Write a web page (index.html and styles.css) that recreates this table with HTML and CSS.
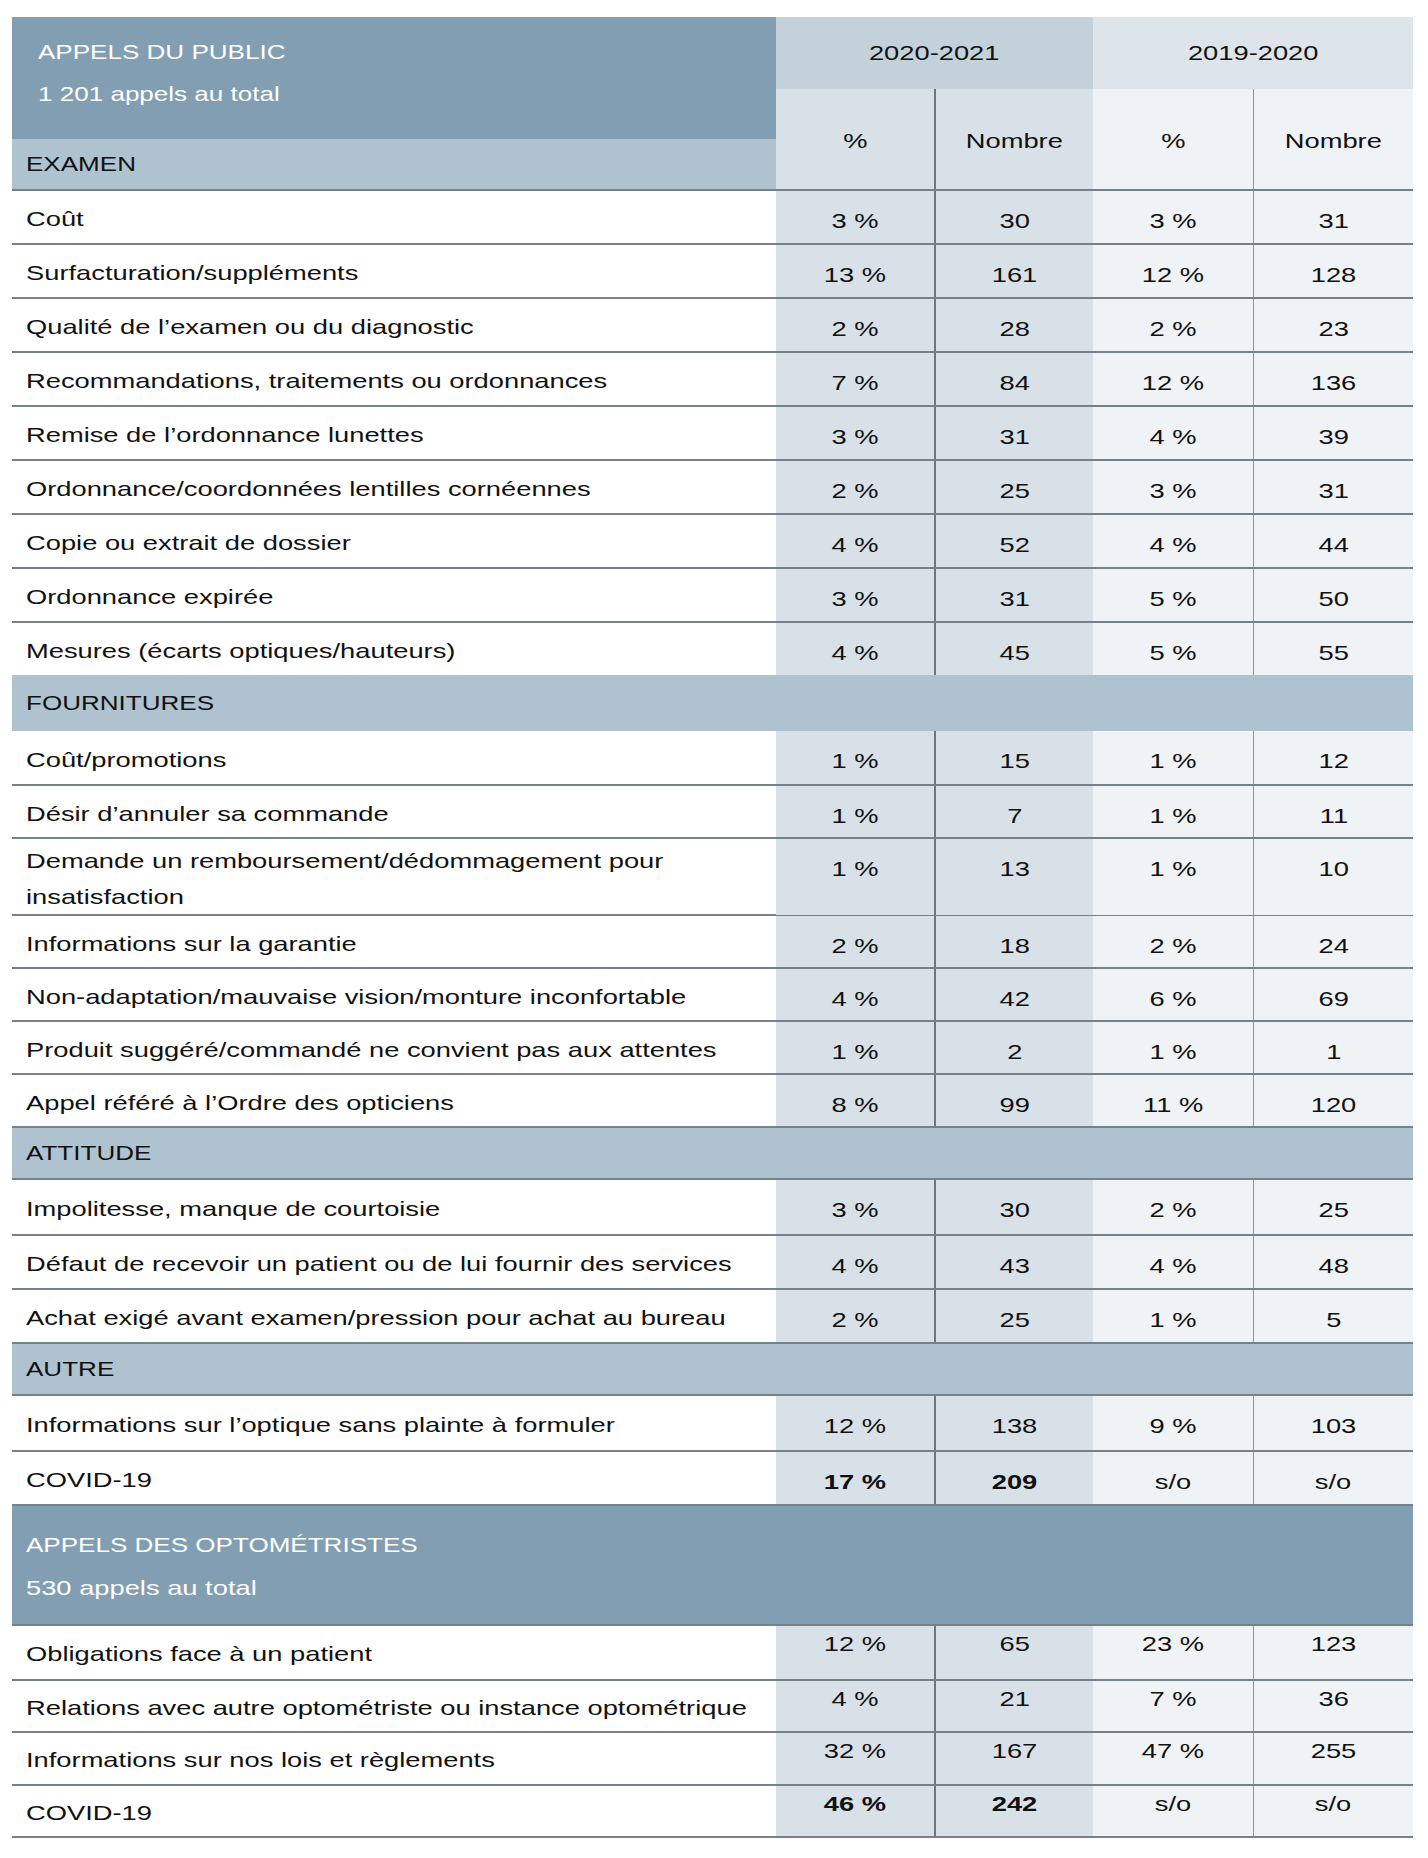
FILE: index.html
```html
<!DOCTYPE html>
<html lang="fr">
<head>
<meta charset="utf-8">
<title>Appels du public</title>
<link rel="stylesheet" href="styles.css">
</head>
<body>
<div class="page">
  <div class="table">
    <div class="cols head">
      <div class="title"><div><span class="t caps">APPELS DU PUBLIC</span></div><div><span class="t caps">1 201 appels au total</span></div></div>
      <div class="hband"><span class="t caps">EXAMEN</span></div>
      <div class="year y20"><span class="t">2020-2021</span></div>
      <div class="sub c20"><span class="t">%</span></div>
      <div class="sub c20 sep20"><span class="t">Nombre</span></div>
      <div class="year y19"><span class="t">2019-2020</span></div>
      <div class="sub c19"><span class="t">%</span></div>
      <div class="sub c19 sep19"><span class="t">Nombre</span></div>
    </div>

    <div class="cols row"><div class="lab"><span class="t">Coût</span></div><div class="num c20"><span class="t">3&nbsp;%</span></div><div class="num c20 sep20"><span class="t">30</span></div><div class="num c19"><span class="t">3&nbsp;%</span></div><div class="num c19 sep19"><span class="t">31</span></div></div>
    <div class="cols row"><div class="lab"><span class="t">Surfacturation/suppléments</span></div><div class="num c20"><span class="t">13&nbsp;%</span></div><div class="num c20 sep20"><span class="t">161</span></div><div class="num c19"><span class="t">12&nbsp;%</span></div><div class="num c19 sep19"><span class="t">128</span></div></div>
    <div class="cols row"><div class="lab"><span class="t">Qualité de l’examen ou du diagnostic</span></div><div class="num c20"><span class="t">2&nbsp;%</span></div><div class="num c20 sep20"><span class="t">28</span></div><div class="num c19"><span class="t">2&nbsp;%</span></div><div class="num c19 sep19"><span class="t">23</span></div></div>
    <div class="cols row"><div class="lab"><span class="t">Recommandations, traitements ou ordonnances</span></div><div class="num c20"><span class="t">7&nbsp;%</span></div><div class="num c20 sep20"><span class="t">84</span></div><div class="num c19"><span class="t">12&nbsp;%</span></div><div class="num c19 sep19"><span class="t">136</span></div></div>
    <div class="cols row"><div class="lab"><span class="t">Remise de l’ordonnance lunettes</span></div><div class="num c20"><span class="t">3&nbsp;%</span></div><div class="num c20 sep20"><span class="t">31</span></div><div class="num c19"><span class="t">4&nbsp;%</span></div><div class="num c19 sep19"><span class="t">39</span></div></div>
    <div class="cols row"><div class="lab"><span class="t">Ordonnance/coordonnées lentilles cornéennes</span></div><div class="num c20"><span class="t">2&nbsp;%</span></div><div class="num c20 sep20"><span class="t">25</span></div><div class="num c19"><span class="t">3&nbsp;%</span></div><div class="num c19 sep19"><span class="t">31</span></div></div>
    <div class="cols row"><div class="lab"><span class="t">Copie ou extrait de dossier</span></div><div class="num c20"><span class="t">4&nbsp;%</span></div><div class="num c20 sep20"><span class="t">52</span></div><div class="num c19"><span class="t">4&nbsp;%</span></div><div class="num c19 sep19"><span class="t">44</span></div></div>
    <div class="cols row"><div class="lab"><span class="t">Ordonnance expirée</span></div><div class="num c20"><span class="t">3&nbsp;%</span></div><div class="num c20 sep20"><span class="t">31</span></div><div class="num c19"><span class="t">5&nbsp;%</span></div><div class="num c19 sep19"><span class="t">50</span></div></div>
    <div class="cols row"><div class="lab"><span class="t">Mesures (écarts optiques/hauteurs)</span></div><div class="num c20"><span class="t">4&nbsp;%</span></div><div class="num c20 sep20"><span class="t">45</span></div><div class="num c19"><span class="t">5&nbsp;%</span></div><div class="num c19 sep19"><span class="t">55</span></div></div>

    <div class="band"><span class="t caps">FOURNITURES</span></div>
    <div class="cols row tight"><div class="lab"><span class="t">Coût/promotions</span></div><div class="num c20"><span class="t">1&nbsp;%</span></div><div class="num c20 sep20"><span class="t">15</span></div><div class="num c19"><span class="t">1&nbsp;%</span></div><div class="num c19 sep19"><span class="t">12</span></div></div>
    <div class="cols row tight"><div class="lab"><span class="t">Désir d’annuler sa commande</span></div><div class="num c20"><span class="t">1&nbsp;%</span></div><div class="num c20 sep20"><span class="t">7</span></div><div class="num c19"><span class="t">1&nbsp;%</span></div><div class="num c19 sep19"><span class="t">11</span></div></div>
    <div class="cols row double"><div class="lab wrap"><span class="t">Demande un remboursement/dédommagement pour insatisfaction</span></div><div class="num c20"><span class="t">1&nbsp;%</span></div><div class="num c20 sep20"><span class="t">13</span></div><div class="num c19"><span class="t">1&nbsp;%</span></div><div class="num c19 sep19"><span class="t">10</span></div></div>
    <div class="cols row tight"><div class="lab"><span class="t">Informations sur la garantie</span></div><div class="num c20"><span class="t">2&nbsp;%</span></div><div class="num c20 sep20"><span class="t">18</span></div><div class="num c19"><span class="t">2&nbsp;%</span></div><div class="num c19 sep19"><span class="t">24</span></div></div>
    <div class="cols row tight"><div class="lab"><span class="t">Non-adaptation/mauvaise vision/monture inconfortable</span></div><div class="num c20"><span class="t">4&nbsp;%</span></div><div class="num c20 sep20"><span class="t">42</span></div><div class="num c19"><span class="t">6&nbsp;%</span></div><div class="num c19 sep19"><span class="t">69</span></div></div>
    <div class="cols row tight"><div class="lab"><span class="t">Produit suggéré/commandé ne convient pas aux attentes</span></div><div class="num c20"><span class="t">1&nbsp;%</span></div><div class="num c20 sep20"><span class="t">2</span></div><div class="num c19"><span class="t">1&nbsp;%</span></div><div class="num c19 sep19"><span class="t">1</span></div></div>
    <div class="cols row tight"><div class="lab"><span class="t">Appel référé à l’Ordre des opticiens</span></div><div class="num c20"><span class="t">8&nbsp;%</span></div><div class="num c20 sep20"><span class="t">99</span></div><div class="num c19"><span class="t">11&nbsp;%</span></div><div class="num c19 sep19"><span class="t">120</span></div></div>

    <div class="band ruled"><span class="t caps">ATTITUDE</span></div>
    <div class="cols row"><div class="lab"><span class="t">Impolitesse, manque de courtoisie</span></div><div class="num c20"><span class="t">3&nbsp;%</span></div><div class="num c20 sep20"><span class="t">30</span></div><div class="num c19"><span class="t">2&nbsp;%</span></div><div class="num c19 sep19"><span class="t">25</span></div></div>
    <div class="cols row"><div class="lab"><span class="t">Défaut de recevoir un patient ou de lui fournir des services</span></div><div class="num c20"><span class="t">4&nbsp;%</span></div><div class="num c20 sep20"><span class="t">43</span></div><div class="num c19"><span class="t">4&nbsp;%</span></div><div class="num c19 sep19"><span class="t">48</span></div></div>
    <div class="cols row"><div class="lab"><span class="t">Achat exigé avant examen/pression pour achat au bureau</span></div><div class="num c20"><span class="t">2&nbsp;%</span></div><div class="num c20 sep20"><span class="t">25</span></div><div class="num c19"><span class="t">1&nbsp;%</span></div><div class="num c19 sep19"><span class="t">5</span></div></div>

    <div class="band ruled"><span class="t caps">AUTRE</span></div>
    <div class="cols row"><div class="lab"><span class="t">Informations sur l’optique sans plainte à formuler</span></div><div class="num c20"><span class="t">12&nbsp;%</span></div><div class="num c20 sep20"><span class="t">138</span></div><div class="num c19"><span class="t">9&nbsp;%</span></div><div class="num c19 sep19"><span class="t">103</span></div></div>
    <div class="cols row"><div class="lab"><span class="t">COVID-19</span></div><div class="num c20 strong"><span class="t">17&nbsp;%</span></div><div class="num c20 sep20 strong"><span class="t">209</span></div><div class="num c19"><span class="t">s/o</span></div><div class="num c19 sep19"><span class="t">s/o</span></div></div>

    <div class="major"><div><span class="t caps">APPELS DES OPTOMÉTRISTES</span></div><div><span class="t">530 appels au total</span></div></div>
    <div class="cols row opto"><div class="lab"><span class="t">Obligations face à un patient</span></div><div class="num c20"><span class="t">12&nbsp;%</span></div><div class="num c20 sep20"><span class="t">65</span></div><div class="num c19"><span class="t">23&nbsp;%</span></div><div class="num c19 sep19"><span class="t">123</span></div></div>
    <div class="cols row opto"><div class="lab"><span class="t">Relations avec autre optométriste ou instance optométrique</span></div><div class="num c20"><span class="t">4&nbsp;%</span></div><div class="num c20 sep20"><span class="t">21</span></div><div class="num c19"><span class="t">7&nbsp;%</span></div><div class="num c19 sep19"><span class="t">36</span></div></div>
    <div class="cols row opto"><div class="lab"><span class="t">Informations sur nos lois et règlements</span></div><div class="num c20"><span class="t">32&nbsp;%</span></div><div class="num c20 sep20"><span class="t">167</span></div><div class="num c19"><span class="t">47&nbsp;%</span></div><div class="num c19 sep19"><span class="t">255</span></div></div>
    <div class="cols row opto"><div class="lab"><span class="t">COVID-19</span></div><div class="num c20 strong"><span class="t">46&nbsp;%</span></div><div class="num c20 sep20 strong"><span class="t">242</span></div><div class="num c19"><span class="t">s/o</span></div><div class="num c19 sep19"><span class="t">s/o</span></div></div>
  </div>
</div>
</body>
</html>
```

FILE: styles.css
```css
:root {
  --dark: #829eb2;
  --band: #afc2cf;
  --y20: #c3d1da;
  --y19: #dde5eb;
  --c20: #d9e1e8;
  --c19: #f0f3f6;
  --line: #76828a;
}

body {
  margin: 0;
  background: #ffffff;
  color: #111111;
  font-family: "Liberation Sans", Arial, sans-serif;
  font-size: 21px;
  line-height: 36px;
}

/* the source typeface is set wide: widen the glyphs */
.t {
  display: inline-block;
  transform: scaleX(1.3);
  transform-origin: left center;
  white-space: nowrap;
}

.t.caps {
  transform: scaleX(1.24);
}

.num .t,
.sub .t,
.year .t {
  transform-origin: center center;
}

.page {
  padding: 17px 0 0 12px;
}

.table {
  width: 1401px;
  border-bottom: 2px solid var(--line);
}

.cols {
  display: grid;
  grid-template-columns: 764px 158px 159px 160px 160px;
}

/* header */
.head {
  grid-template-rows: 72px 50px 50px;
}

.title {
  grid-column: 1;
  grid-row: 1 / 3;
  background: var(--dark);
  color: #ffffff;
  padding: 14px 0 0 26px;
  line-height: 42px;
}

.hband {
  grid-column: 1;
  grid-row: 3;
  background: var(--band);
  padding-left: 14px;
  display: flex;
  align-items: center;
}

.year {
  grid-row: 1;
  display: flex;
  align-items: center;
  justify-content: center;
}

.y20 { grid-column: 2 / 4; background: var(--y20); }
.y19 { grid-column: 4 / 6; background: var(--y19); }

.sub {
  grid-row: 2 / 4;
  display: flex;
  align-items: center;
  justify-content: center;
  padding-top: 4px;
}

/* body rows */
.row {
  height: 54px;
  box-sizing: border-box;
  border-top: 2px solid var(--line);
}

.row.tight { height: 53px; }
.row.double { height: 77px; }
.row.opto { height: 52.5px; }

.lab {
  padding: 4px 0 0 14px;
  display: flex;
  align-items: center;
}

.lab.wrap .t {
  white-space: normal;
  width: 520px;
}

.num {
  text-align: center;
  padding-top: 12px;
}

.opto .num { padding-top: 0; }

.strong { font-weight: bold; }

.c20 { background: var(--c20); }
.c19 { background: var(--c19); }
.sep20 { border-left: 2px solid #6b767e; }
.sep19 { border-left: 1px solid #8c969d; }

/* section bands */
.band {
  height: 56px;
  box-sizing: border-box;
  background: var(--band);
  padding-left: 14px;
  display: flex;
  align-items: center;
}

.band.ruled {
  height: 54px;
  border-top: 2px solid var(--line);
  border-bottom: 2px solid var(--line);
}

.band + .row,
.major + .row {
  border-top: none;
}

.major {
  height: 122px;
  box-sizing: border-box;
  background: var(--dark);
  color: #ffffff;
  border-top: 2px solid var(--line);
  border-bottom: 2px solid var(--line);
  padding: 17px 0 0 14px;
  line-height: 43px;
}
```
